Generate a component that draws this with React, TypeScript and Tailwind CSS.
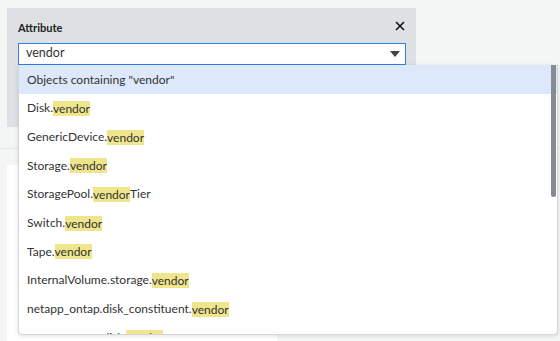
import { Fragment } from "react";

interface Option {
  before: string;
  match: string;
  after: string;
}

const options: Option[] = [
  { before: "Disk.", match: "vendor", after: "" },
  { before: "GenericDevice.", match: "vendor", after: "" },
  { before: "Storage.", match: "vendor", after: "" },
  { before: "StoragePool.", match: "vendor", after: "Tier" },
  { before: "Switch.", match: "vendor", after: "" },
  { before: "Tape.", match: "vendor", after: "" },
  { before: "InternalVolume.storage.", match: "vendor", after: "" },
  { before: "netapp_ontap.disk_constituent.", match: "vendor", after: "" },
  { before: "netapp_ontap.disk.", match: "vendor", after: "" },
];

const App: React.FC = () => {
  return (
    <div className="relative w-[560px] h-[341px] overflow-hidden bg-[#f4f5f5] font-['Lato',sans-serif] text-[#333]">
      {/* background page */}
      <div className="pt-2 pl-[7px]">
        <div className="w-[409px] h-[119px] bg-[#dde1e4] px-[11px] pt-[12px]">
          <div className="flex items-center justify-between">
            <span className="text-[11px] font-bold text-[#222]">Attribute</span>
            <svg width="10" height="10" viewBox="0 0 10 10" className="self-start mt-[1px]">
              <path d="M1 1L9 9M9 1L1 9" stroke="#111" strokeWidth="1.6" />
            </svg>
          </div>
          <div className="mt-[6px] flex h-[22px] w-[388px] items-center justify-between border border-[#2f7fe6] bg-white pl-[7px] pr-[5px]">
            <span className="text-[12.5px] leading-none">vendor</span>
            <svg width="10" height="6" viewBox="0 0 10 6">
              <path d="M0 0H10L5 6Z" fill="#444" />
            </svg>
          </div>
        </div>
        <div className="mt-[21px] -ml-[7px] h-px w-[560px] bg-[#e3e5e7]" />
        <div className="mt-4 h-[200px] w-[270px] bg-white" />
      </div>

      {/* dropdown */}
      <div className="absolute left-[18px] top-[65px] w-[540px] h-[270px] overflow-hidden rounded-b-[4px] border border-t-0 border-[#d4d6d8] bg-white shadow-[0_1px_4px_rgba(0,0,0,0.12)]">
        <div className="flex h-[29px] items-center bg-[#dde9fa] pl-[8px] text-[12px]">
          Objects containing "vendor"
        </div>
        {options.map((o, i) => (
          <div key={i} className="flex h-[28.7px] items-center pl-[8px] text-[12px] whitespace-pre">
            <Fragment>
              <span>{o.before}</span>
              <span className="bg-[#efe58c] leading-[15px]">{o.match}</span>
              <span>{o.after}</span>
            </Fragment>
          </div>
        ))}
        <div className="absolute right-[1px] top-0 h-[132px] w-[5px] rounded-b-[2px] bg-[#878c93]" />
      </div>
    </div>
  );
};

export default App;
